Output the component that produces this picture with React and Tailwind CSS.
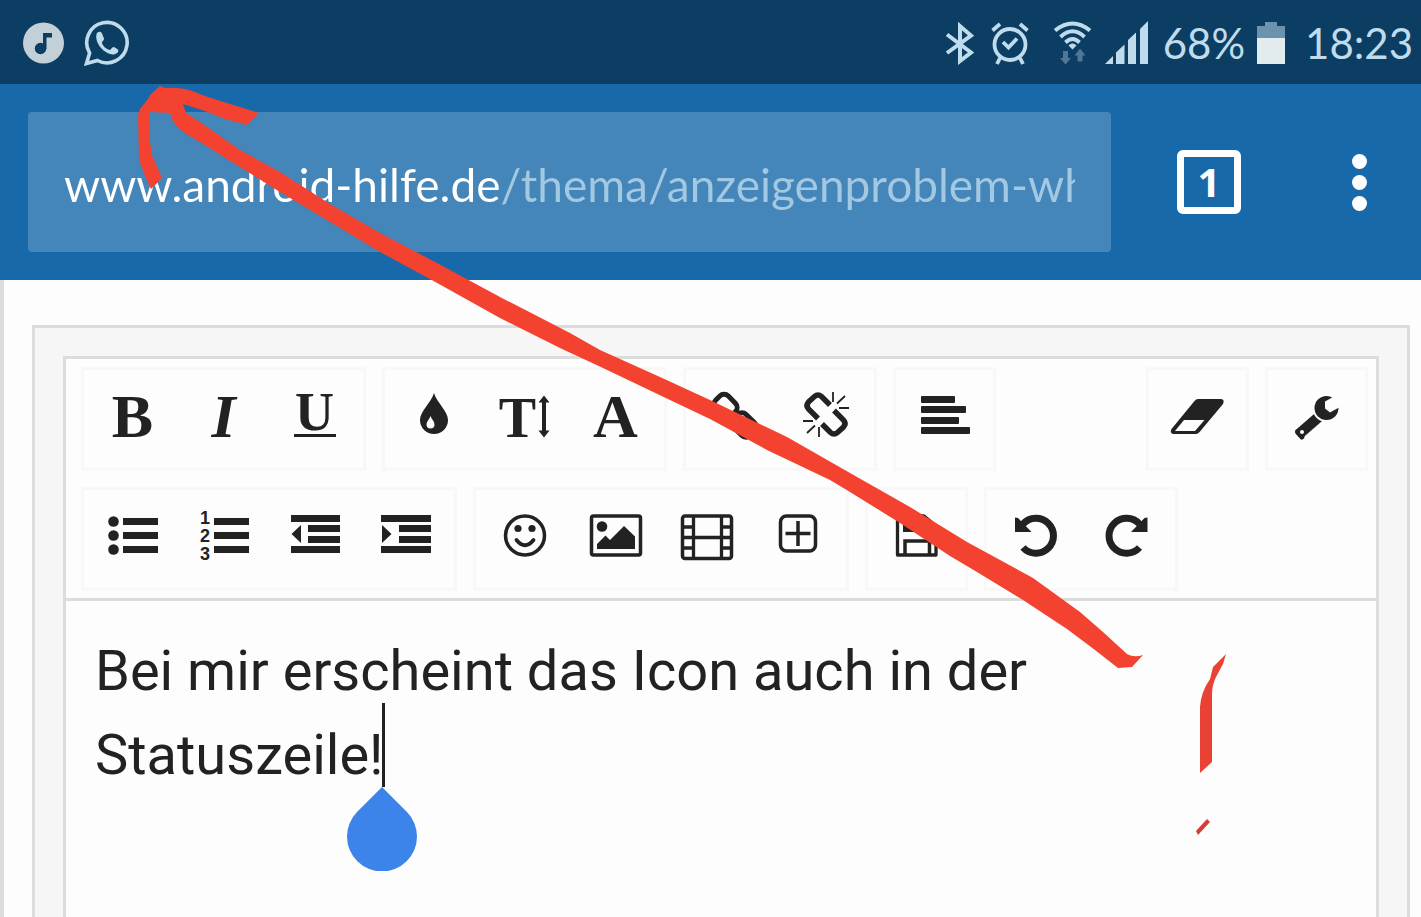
import React from "react";

const INK = "#222222";
const PAPER = "#fdfdfd";

function Glyph({ children }) {
  return (
    <svg viewBox="0 0 91 92" className="h-[92px] w-[91px]" fill={INK} stroke="none" aria-hidden="true">
      {children}
    </svg>
  );
}

function Tool({ label, children }) {
  return (
    <button type="button" aria-label={label} className="flex h-[92px] w-[91px] items-start justify-center text-[#222222]">
      {children}
    </button>
  );
}

function Letter({ className, children }) {
  return <span className={"font-['Liberation_Serif',serif] text-[62px] leading-[86px] " + className}>{children}</span>;
}

function Group({ children }) {
  return <div className="flex border-3 border-[#f8f8f8] p-[3px]">{children}</div>;
}

function StatusBar() {
  return (
    <header className="flex h-[84px] items-center justify-between bg-[#0c3d63] pt-0.5 pr-2 pl-[23px] text-[#bfdcec]">
      <div className="flex items-center gap-5">
        <svg viewBox="0 0 41 46" className="h-[46px] w-[41px]" role="img" aria-label="Musik">
          <circle cx="20.5" cy="23" r="20.5" fill="#c3d0d8" />
          <circle cx="17.5" cy="28.5" r="5.7" fill="#0c3d63" />
          <path d="M20 13h9v4.500h-5.500v11.500H20z" fill="#0c3d63" />
        </svg>
        <svg viewBox="0 0 46 46" className="h-[46px] w-[46px]" role="img" aria-label="WhatsApp">
          <path d="M2.500 43.500L5.600 33A20.200 20.200 0 1 1 13.500 40.500Z" fill="none" stroke="currentColor" strokeWidth="3.600" strokeLinejoin="miter" />
          <path d="M12.500 14C13.500 11.500 17 11 18 13.500L20 18.500C20.300 20.500 17.500 21.500 18 23.500C19.500 27 22.500 29 25.500 30C27.500 29.500 28 26.500 30 27L34 29.500C35.500 32 32 34.500 29 34.500C20 34 10.500 23 12.500 14Z" fill="currentColor" />
        </svg>
      </div>
      <div className="flex items-center">
        <svg viewBox="0 0 30 44" className="h-11 w-[30px]" role="img" aria-label="Bluetooth">
          <path d="M2 13.500L26 31.500L15 40V5L26 14.500L2 32" fill="none" stroke="currentColor" strokeWidth="4" />
        </svg>
        <svg viewBox="0 0 38 44" className="ml-4 h-11 w-[38px]" fill="none" stroke="currentColor" strokeWidth="3.800" role="img" aria-label="Wecker">
          <circle cx="19" cy="23.500" r="15.500" />
          <path d="M1.500 9.500L9 3M36.500 9.500L29 3M9 37l-3 6M29 37l3 6M12 21l5.500 5.500L26 17.500" />
        </svg>
        <svg viewBox="0 0 40 44" className="ml-6 h-11 w-10" role="img" aria-label="WLAN">
          <path d="M2 9.500Q19.500-4.500 37 9.500M7.500 16Q19.500 4.500 31.500 16M12.500 21.500Q19.500 14.500 26.500 21.500" fill="none" stroke="currentColor" strokeWidth="3.900" />
          <path d="M15.500 24.500Q19.500 20.500 23.500 24.500L19.500 28.500Z" fill="currentColor" />
          <path d="M10 30h5v7h3l-5.500 6.500L7 37h3zM24.500 40.500v-6h-3l5.500-7 5.500 7h-3v6z" fill="#4f7896" />
        </svg>
        <svg viewBox="0 0 44 44" className="ml-3 h-11 w-11" fill="currentColor" role="img" aria-label="Mobilfunk">
          <path d="M0 43l8-8v8zM11 43V31.500l8.500-8V43zM23 43V19l8-7.500V43zM35 43V8l8-8v43z" />
        </svg>
        <span className="ml-[14px] font-['Lato',sans-serif] text-[42px] leading-[44px]">68%</span>
        <svg viewBox="0 0 28 44" className="ml-3 h-11 w-7" role="img" aria-label="Akku">
          <path d="M8 1h12v4h8v12H0V5h8z" fill="#6b93ae" />
          <path d="M0 17h28v26H0z" fill="#e2ebed" />
        </svg>
        <time className="ml-5 font-['Lato',sans-serif] text-[42px] leading-[44px]">18:23</time>
      </div>
    </header>
  );
}

function BrowserBar() {
  return (
    <nav className="flex h-[196px] items-center bg-[#1769aa] pr-[39px] pl-7 text-white">
      <div className="flex h-[140px] min-w-0 flex-1 items-center rounded-sm bg-[#4486b9] px-9 pt-1.5">
        <input
          type="text"
          aria-label="Adresse"
          spellCheck="false"
          defaultValue="www.android-hilfe.de/thema/anzeigenproblem-whatsapp"
          className="w-full bg-[linear-gradient(to_right,#ffffff_438px,#a3c8e2_438px)] bg-clip-text font-['Lato',sans-serif] text-[46px] leading-[60px] text-transparent outline-none"
        />
      </div>
      <button type="button" aria-label="1 Tab offen" className="ml-[66px] flex h-16 w-16 items-center justify-center rounded-md border-7 border-white font-['Open_Sans',sans-serif] text-[40px] leading-[50px] font-bold">
        1
      </button>
      <button type="button" aria-label="Menü" className="ml-24 flex w-[45px] flex-col items-center gap-1.5">
        <span className="h-[15px] w-[15px] rounded-full bg-white" />
        <span className="h-[15px] w-[15px] rounded-full bg-white" />
        <span className="h-[15px] w-[15px] rounded-full bg-white" />
      </button>
    </nav>
  );
}

function Toolbar() {
  return (
    <div role="toolbar" aria-label="Formatierung" className="flex flex-col gap-4 border-b-3 border-[#dcdcdc] pt-2 pr-2 pb-[7px] pl-[15px]">
      <div className="flex gap-4">
        <Group>
          <Tool label="Fett"><Letter className="font-bold">B</Letter></Tool>
          <Tool label="Kursiv"><Letter className="font-bold italic">I</Letter></Tool>
          <Tool label="Unterstrichen">
            <span className="flex flex-col items-center">
              <span className="h-[61px] font-['Liberation_Serif',serif] text-[54px] leading-[78px] font-bold">U</span>
              <span className="h-[3px] w-[42px] bg-[#222222]" />
            </span>
          </Tool>
        </Group>
        <Group>
          <Tool label="Textfarbe">
            <Glyph>
              <path d="M46 20C49 30 60 38 60 47A14 14 0 0 1 32 47C32 38 43 30 46 20Z" />
              <path d="M42.500 43C43.500 46 46.500 48.500 46.500 51.500A4 4 0 0 1 38.500 51.500C38.500 48.500 41.500 46 42.500 43Z" fill={PAPER} />
            </Glyph>
          </Tool>
          <Tool label="Schriftgröße">
            <span className="flex gap-0.5">
              <span className="font-['Liberation_Serif',serif] text-[56px] leading-[90px] font-bold">T</span>
              <svg viewBox="0 0 12 92" className="h-[92px] w-3" fill={INK} aria-hidden="true">
                <path d="M6 22.500L11.500 29.500H8V57.500H11.500L6 64.500L0.500 57.500H4V29.500H0.500Z" />
              </svg>
            </span>
          </Tool>
          <Tool label="Schriftart"><Letter className="font-bold">A</Letter></Tool>
        </Group>
        <Group>
          <Tool label="Link einfügen">
            <Glyph>
              <g fill="none" stroke={INK} strokeWidth="5">
                <rect x="25.500" y="24" width="22" height="18" rx="6" transform="rotate(45 36.500 33)" />
                <rect x="43" y="43" width="24" height="18" rx="6" transform="rotate(45 55 52)" />
              </g>
            </Glyph>
          </Tool>
          <Tool label="Link entfernen">
            <Glyph>
              <g fill="none" stroke={INK} strokeWidth="5.500">
                <path d="M50 32L41.500 23.500Q38 20.500 34.500 23.500L28.500 29Q25.500 32.500 28.500 36L38 45.500" />
                <path d="M42 51L50.500 59.500Q54 62.500 57.500 59.500L63.500 54Q66.500 50.500 63.500 47L54 37.500" />
              </g>
              <path d="M53 19v10M65 23l-8 7.500M69 35H59M39 54v10M27 60l8-7.500M23 48h10" fill="none" stroke={INK} strokeWidth="1.800" />
            </Glyph>
          </Tool>
        </Group>
        <Group>
          <Tool label="Ausrichtung">
            <Glyph>
              <rect x="22" y="23" width="34" height="7" rx="1" />
              <rect x="22" y="33" width="45" height="7" rx="1" />
              <rect x="22" y="44" width="38" height="7" rx="1" />
              <rect x="22" y="54" width="49" height="7" rx="1" />
            </Glyph>
          </Tool>
        </Group>
        <div className="ml-auto flex gap-4">
          <Group>
            <Tool label="Formatierung entfernen">
              <Glyph>
                <path d="M46 26H69Q73 26.500 71 31L48 58.500Q46 61 43.500 61H21Q17.500 60 19.500 56L42.500 28Q44 26 46 26Z" />
                <path d="M32 47H52.500L43 58H23Z" fill={PAPER} />
              </Glyph>
            </Tool>
          </Group>
          <Group>
            <Tool label="BB-Code-Modus">
              <Glyph>
                <path d="M50 42L27.500 61.500" stroke={INK} strokeWidth="10.500" strokeLinecap="butt" />
                <path d="M26.500 59L31 64" stroke={INK} strokeWidth="5" strokeLinecap="round" />
                <circle cx="55.500" cy="35" r="14" fill={PAPER} />
                <circle cx="55.500" cy="35" r="12" />
                <path d="M62 24L54 28.500V35.500L59 39.500L68 34.500L71.500 20Z" fill={PAPER} />
                <circle cx="31" cy="59" r="2" fill={PAPER} />
              </Glyph>
            </Tool>
          </Group>
        </div>
      </div>
      <div className="flex gap-4">
        <Group>
          <Tool label="Aufzählung">
            <Glyph>
              <circle cx="26.500" cy="28.500" r="5.300" />
              <circle cx="26.500" cy="42.500" r="5.300" />
              <circle cx="26.500" cy="56.500" r="5.300" />
              <path d="M36 25h35v7H36zM36 39h35v7H36zM36 53h35v7H36z" />
            </Glyph>
          </Tool>
          <Tool label="Nummerierte Liste">
            <Glyph>
              <g className="font-['Liberation_Sans',sans-serif] text-[18px] font-bold" textAnchor="middle">
                <text x="27" y="31">1</text>
                <text x="27" y="49">2</text>
                <text x="27" y="67">3</text>
              </g>
              <path d="M36 25h35v7H36zM36 39h35v7H36zM36 53h35v7H36z" />
            </Glyph>
          </Tool>
          <Tool label="Einzug verkleinern">
            <Glyph>
              <path d="M22 22h49v7H22zM39 32h32v7H39zM39 43h32v7H39zM22 53h49v7H22zM22.500 41l9.500-9v18z" />
            </Glyph>
          </Tool>
          <Tool label="Einzug vergrößern">
            <Glyph>
              <path d="M21 22h50v7H21zM39 32h32v7H39zM39 43h32v7H39zM21 53h50v7H21zM31.500 41l-9.500-9v18z" />
            </Glyph>
          </Tool>
        </Group>
        <Group>
          <Tool label="Smileys">
            <Glyph>
              <circle cx="46" cy="42.500" r="19.500" fill="none" stroke={INK} strokeWidth="3.500" />
              <circle cx="39" cy="35.500" r="3.600" />
              <circle cx="53" cy="35.500" r="3.600" />
              <path d="M37.500 47Q46 57.500 54.500 47" fill="none" stroke={INK} strokeWidth="3.800" strokeLinecap="round" />
            </Glyph>
          </Tool>
          <Tool label="Bild einfügen">
            <Glyph>
              <rect x="21.500" y="23" width="49" height="39" rx="2" fill="none" stroke={INK} strokeWidth="3.500" />
              <circle cx="32" cy="33.500" r="5.300" />
              <path d="M27 51L35.500 42.500L40 47L54 33L65 43.500V56H27Z" />
            </Glyph>
          </Tool>
          <Tool label="Medien einfügen">
            <Glyph>
              <rect x="21.500" y="23" width="49" height="42.500" rx="2.500" fill="none" stroke={INK} strokeWidth="3.500" />
              <path d="M32.500 23v42M60.500 23v42M21 34h11M21 44.500h50M21 55h11M60 34h11M60 55h11" fill="none" stroke={INK} strokeWidth="3.300" />
            </Glyph>
          </Tool>
          <Tool label="Einfügen">
            <Glyph>
              <rect x="28.500" y="23" width="35" height="35" rx="6" fill="none" stroke={INK} strokeWidth="3.500" />
              <path d="M46 28v25M33.500 40.500h25" stroke={INK} strokeWidth="3.500" />
            </Glyph>
          </Tool>
        </Group>
        <Group>
          <Tool label="Entwurf speichern">
            <Glyph>
              <path d="M26.500 23H53L65 33V62H26.500Z" fill="none" stroke={INK} strokeWidth="3.300" strokeLinejoin="round" />
              <path d="M32 22h22v17H32z" />
              <path d="M34 62V48H58.500V62" fill="none" stroke={INK} strokeWidth="3.500" />
            </Glyph>
          </Tool>
        </Group>
        <Group>
          <Tool label="Rückgängig">
            <Glyph>
              <path d="M33 31A17.500 17.500 0 1 1 33 54.500" fill="none" stroke={INK} strokeWidth="7" />
              <path d="M25 24.500L28 25L41.500 39H25Z" />
            </Glyph>
          </Tool>
          <Tool label="Wiederholen">
            <Glyph>
              <path d="M58.500 31A17.500 17.500 0 1 0 58.500 54.500" fill="none" stroke={INK} strokeWidth="7" />
              <path d="M66.500 24.500L63.500 25L50 39H66.500Z" />
            </Glyph>
          </Tool>
        </Group>
      </div>
    </div>
  );
}

function Editor() {
  return (
    <main className="flex flex-1 flex-col border-l-4 border-[#dddddd] bg-[#fdfdfd] pt-[45px] pr-[11px] pl-7">
      <div className="flex flex-1 flex-col border-3 border-b-0 border-[#dcdcdc] bg-[#f6f6f6] px-7 pt-7">
        <div className="flex flex-1 flex-col border-3 border-b-0 border-[#dcdcdc] bg-[#fdfdfd]">
          <Toolbar />
          <div className="relative flex flex-1 px-[29px] pt-7">
            <textarea
              aria-label="Beitrag"
              spellCheck="false"
              defaultValue={"Bei mir erscheint das Icon auch in der\nStatuszeile!"}
              className="min-h-[260px] flex-1 resize-none overflow-hidden bg-transparent font-['Roboto',sans-serif] text-[56px] leading-[84px] text-[#222222] outline-none"
            />
            <span className="absolute top-[102px] left-[316px] h-[84px] w-[3px] bg-[#222222]" />
            <svg viewBox="0 0 70 84" className="absolute top-[186px] left-[281px] h-[84px] w-[70px]" aria-hidden="true">
              <path d="M35 0L60 25A35 35 0 1 1 10 25Z" fill="#3d84ea" />
            </svg>
          </div>
        </div>
      </div>
    </main>
  );
}

function Annotation() {
  return (
    <svg viewBox="0 0 1421 917" className="pointer-events-none absolute top-0 left-0 h-[917px] w-[1421px] max-w-none" fill="#f3422f" aria-hidden="true">
      <path d="M160 86L165 88Q180 87 192 91L205 96L230 104L259 113L247 125L225 119L205 111L183 104L186 113L200 122L240 150L280 172L330 204L380 233L437 263L500 297L570 333L600 350L660 377L710 400L787 437L850 473L910 507L967 542L1033 578L1080 612L1103 632L1127 654Q1134 658 1143 655L1132 667L1118 668L1095 650L1067 629L1023 600L977 572L950 556L900 523L850 492L830 480L767 450L710 419L670 400L603 368L560 348L500 318L430 279L380 252L340 228L280 192L235 164L200 142L188 135Q173 127 170 113L150 112Q148 135 152 155L162 178L151 189Q142 170 139 159L138 115L140 109L148 99L150 95Z" />
      <path fill="#e94235" d="M1226 654L1223 664L1216 677Q1212 685 1212 695V762L1200 773V707Q1201 692 1210 679L1213 667Z" />
      <path fill="#d33f38" d="M1196 831L1207 819L1210 822L1198 835Z" />
    </svg>
  );
}

export default function App() {
  return (
    <div className="relative flex min-h-screen flex-col overflow-hidden bg-[#fdfdfd]">
      <StatusBar />
      <BrowserBar />
      <Editor />
      <Annotation />
    </div>
  );
}
